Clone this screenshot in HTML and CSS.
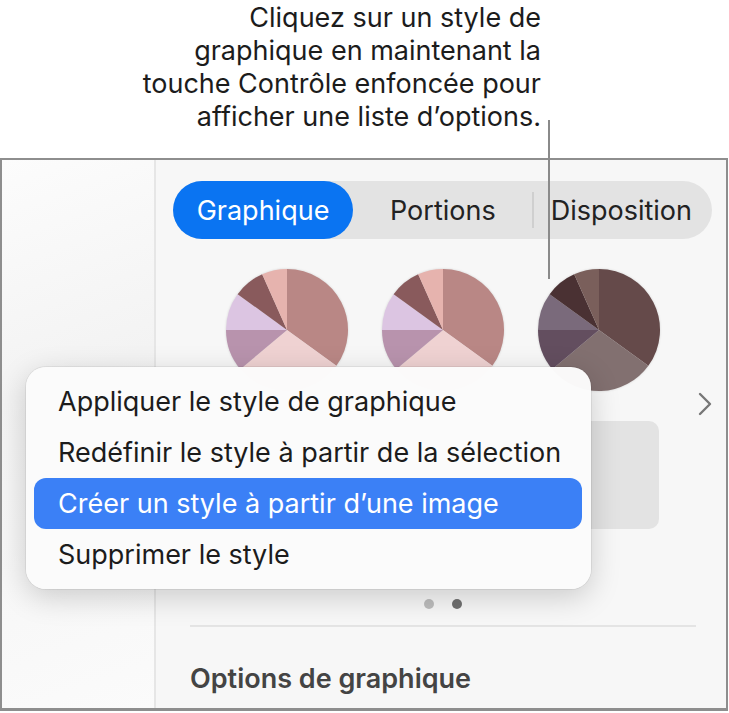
FILE: index.html
```html
<!DOCTYPE html>
<html lang="fr">
<head>
    <meta charset="UTF-8">
    <meta name="viewport" content="width=device-width, initial-scale=1.0">
    <title>Styles de graphique</title>
    <link rel="stylesheet" href="styles.css">
</head>
<body>
    <div class="page">
        <div class="callout">
            <p class="callout-text">Cliquez sur un style de<br>graphique en maintenant la<br>touche Contrôle enfoncée pour<br>afficher une liste d’options.</p>
        </div>
        <span class="callout-line"></span>

        <div class="window">
            <aside class="sidebar"></aside>

            <section class="inspector">
                <div class="tabs">
                    <span class="tab active">Graphique</span>
                    <span class="tab">Portions</span>
                    <span class="tab-sep"></span>
                    <span class="tab">Disposition</span>
                </div>

                <div class="styles">
                    <div class="styles-grid">
                        <div class="pie-row">
                            <svg class="pie" viewBox="0 0 124 124" width="124" height="124">
                                <path class="s1" d="M62 62 L62 1 A61 61 0 0 1 111.35 97.86 Z"/>
                                <path class="s2" d="M62 62 L111.35 97.86 A61 61 0 0 1 15.27 101.21 Z"/>
                                <path class="s3" d="M62 62 L15.27 101.21 A61 61 0 0 1 1 62 Z"/>
                                <path class="s4" d="M62 62 L1 62 A61 61 0 0 1 12.65 26.14 Z"/>
                                <path class="s5" d="M62 62 L12.65 26.14 A61 61 0 0 1 37.19 6.27 Z"/>
                                <path class="s6" d="M62 62 L37.19 6.27 A61 61 0 0 1 62 1 Z"/>
                            </svg>
                            <svg class="pie" viewBox="0 0 124 124" width="124" height="124">
                                <path class="s1" d="M62 62 L62 1 A61 61 0 0 1 111.35 97.86 Z"/>
                                <path class="s2" d="M62 62 L111.35 97.86 A61 61 0 0 1 15.27 101.21 Z"/>
                                <path class="s3" d="M62 62 L15.27 101.21 A61 61 0 0 1 1 62 Z"/>
                                <path class="s4" d="M62 62 L1 62 A61 61 0 0 1 12.65 26.14 Z"/>
                                <path class="s5" d="M62 62 L12.65 26.14 A61 61 0 0 1 37.19 6.27 Z"/>
                                <path class="s6" d="M62 62 L37.19 6.27 A61 61 0 0 1 62 1 Z"/>
                            </svg>
                            <svg class="pie dark" viewBox="0 0 124 124" width="124" height="124">
                                <path class="s1" d="M62 62 L62 1 A61 61 0 0 1 111.35 97.86 Z"/>
                                <path class="s2" d="M62 62 L111.35 97.86 A61 61 0 0 1 15.27 101.21 Z"/>
                                <path class="s3" d="M62 62 L15.27 101.21 A61 61 0 0 1 1 62 Z"/>
                                <path class="s4" d="M62 62 L1 62 A61 61 0 0 1 12.65 26.14 Z"/>
                                <path class="s5" d="M62 62 L12.65 26.14 A61 61 0 0 1 37.19 6.27 Z"/>
                                <path class="s6" d="M62 62 L37.19 6.27 A61 61 0 0 1 62 1 Z"/>
                            </svg>
                        </div>
                        <div class="swatch"></div>
                    </div>
                    <svg class="chevron" viewBox="0 0 14 24" width="14" height="24">
                        <path d="M2 2 L12 12 L2 22" fill="none" stroke="#777" stroke-width="2.4" stroke-linecap="round" stroke-linejoin="round"/>
                    </svg>
                </div>

                <div class="dots">
                    <span class="dot"></span>
                    <span class="dot current"></span>
                </div>

                <hr class="divider">

                <h3 class="section-title">Options de graphique</h3>
            </section>

            <ul class="menu">
                <li class="menu-item">Appliquer le style de graphique</li>
                <li class="menu-item">Redéfinir le style à partir de la sélection</li>
                <li class="menu-item selected">Créer un style à partir d’une image</li>
                <li class="menu-item">Supprimer le style</li>
            </ul>
        </div>
    </div>
</body>
</html>
```

FILE: styles.css
```css
body {
    margin: 0;
    background-color: white;
    font-family: Inter, "Noto Sans", sans-serif;
    color: #1c1c1c;
}

.page {
    position: relative;
    width: 729px;
    height: 713px;
    overflow: hidden;
}

.callout {
    height: 158px;
    width: 541px;
}

.callout-text {
    margin: 0;
    padding-top: 1px;
    text-align: right;
    font-size: 27px;
    line-height: 33px;
}

/* leader line from the note down to the third style */
.callout-line {
    position: absolute;
    left: 548px;
    top: 120px;
    width: 2px;
    height: 159px;
    background-color: #8a8a8a;
    z-index: 3;
}

.window {
    position: relative;
    display: flex;
    width: 728px;
    height: 553px;
    box-sizing: border-box;
    border: 2px solid #8e8e8e;
    border-bottom-width: 3px;
}

.sidebar {
    width: 152px;
    flex-shrink: 0;
    background: linear-gradient(160deg, #fcfcfc, #f3f3f3 40%, #fbfbfb);
    border-right: 2px solid #e6e6e6;
}

.inspector {
    flex: 1;
    padding: 21px 14px 0 17px;
    background-color: #f7f7f7;
}

.tabs {
    display: flex;
    align-items: center;
    height: 58px;
    background-color: #e3e3e3;
    border-radius: 29px;
}

.tab {
    font-size: 27px;
    color: #222;
}

.tab.active {
    display: flex;
    align-items: center;
    justify-content: center;
    width: 180px;
    height: 58px;
    border-radius: 29px;
    background-color: #0a74f2;
    color: white;
    margin-right: 37px;
}

.tab-sep {
    width: 2px;
    height: 36px;
    background-color: #cfcfcf;
    margin: 0 17px 0 36px;
}

.styles {
    display: flex;
    margin-top: 29px;
}

.styles-grid {
    margin-left: 52px;
}

.pie-row {
    display: flex;
    gap: 32px;
}

.pie {
    display: block;
    filter: drop-shadow(0 0 1px rgba(0,0,0,0.15));
}

.pie .s1 { fill: #b98785; }
.pie .s2 { fill: #efd2d2; }
.pie .s3 { fill: #b893ad; }
.pie .s4 { fill: #dcc5e2; }
.pie .s5 { fill: #895a5c; }
.pie .s6 { fill: #e6b3ae; }

.pie.dark .s1 { fill: #654a4a; }
.pie.dark .s2 { fill: #827070; }
.pie.dark .s3 { fill: #634e5f; }
.pie.dark .s4 { fill: #7a6a7b; }
.pie.dark .s5 { fill: #4a3133; }
.pie.dark .s6 { fill: #7a5f5b; }

.swatch {
    margin: 29px 0 0 156px;
    width: 278px;
    height: 108px;
    border-radius: 10px;
    background-color: #e3e3e3;
}

.chevron {
    margin: 124px 0 0 auto;
}

.dots {
    display: flex;
    justify-content: center;
    gap: 18px;
    margin-top: 70px;
}

.dot {
    width: 10px;
    height: 10px;
    border-radius: 50%;
    background-color: #bdbdbd;
}

.dot.current {
    background-color: #707070;
}

.divider {
    margin: 16px 16px 0 17px;
    border: none;
    height: 2px;
    background-color: #e4e4e4;
}

.section-title {
    margin: 35px 0 0 17px;
    font-size: 27px;
    font-weight: 600;
    color: #444;
}

.menu {
    position: absolute;
    left: 24px;
    top: 207px;
    width: 565px;
    margin: 0;
    padding: 9px 9px 9px 8px;
    box-sizing: border-box;
    list-style: none;
    background-color: rgba(251,251,251,0.98);
    border-radius: 20px;
    box-shadow: 0 8px 30px rgba(0,0,0,0.18), 0 0 0 1px rgba(0,0,0,0.06);
    z-index: 2;
}

.menu-item {
    height: 51px;
    line-height: 51px;
    padding-left: 24px;
    border-radius: 12px;
    font-size: 27px;
    color: #1c1c1c;
}

.menu-item.selected {
    background-color: #3b80f6;
    color: white;
}
```
